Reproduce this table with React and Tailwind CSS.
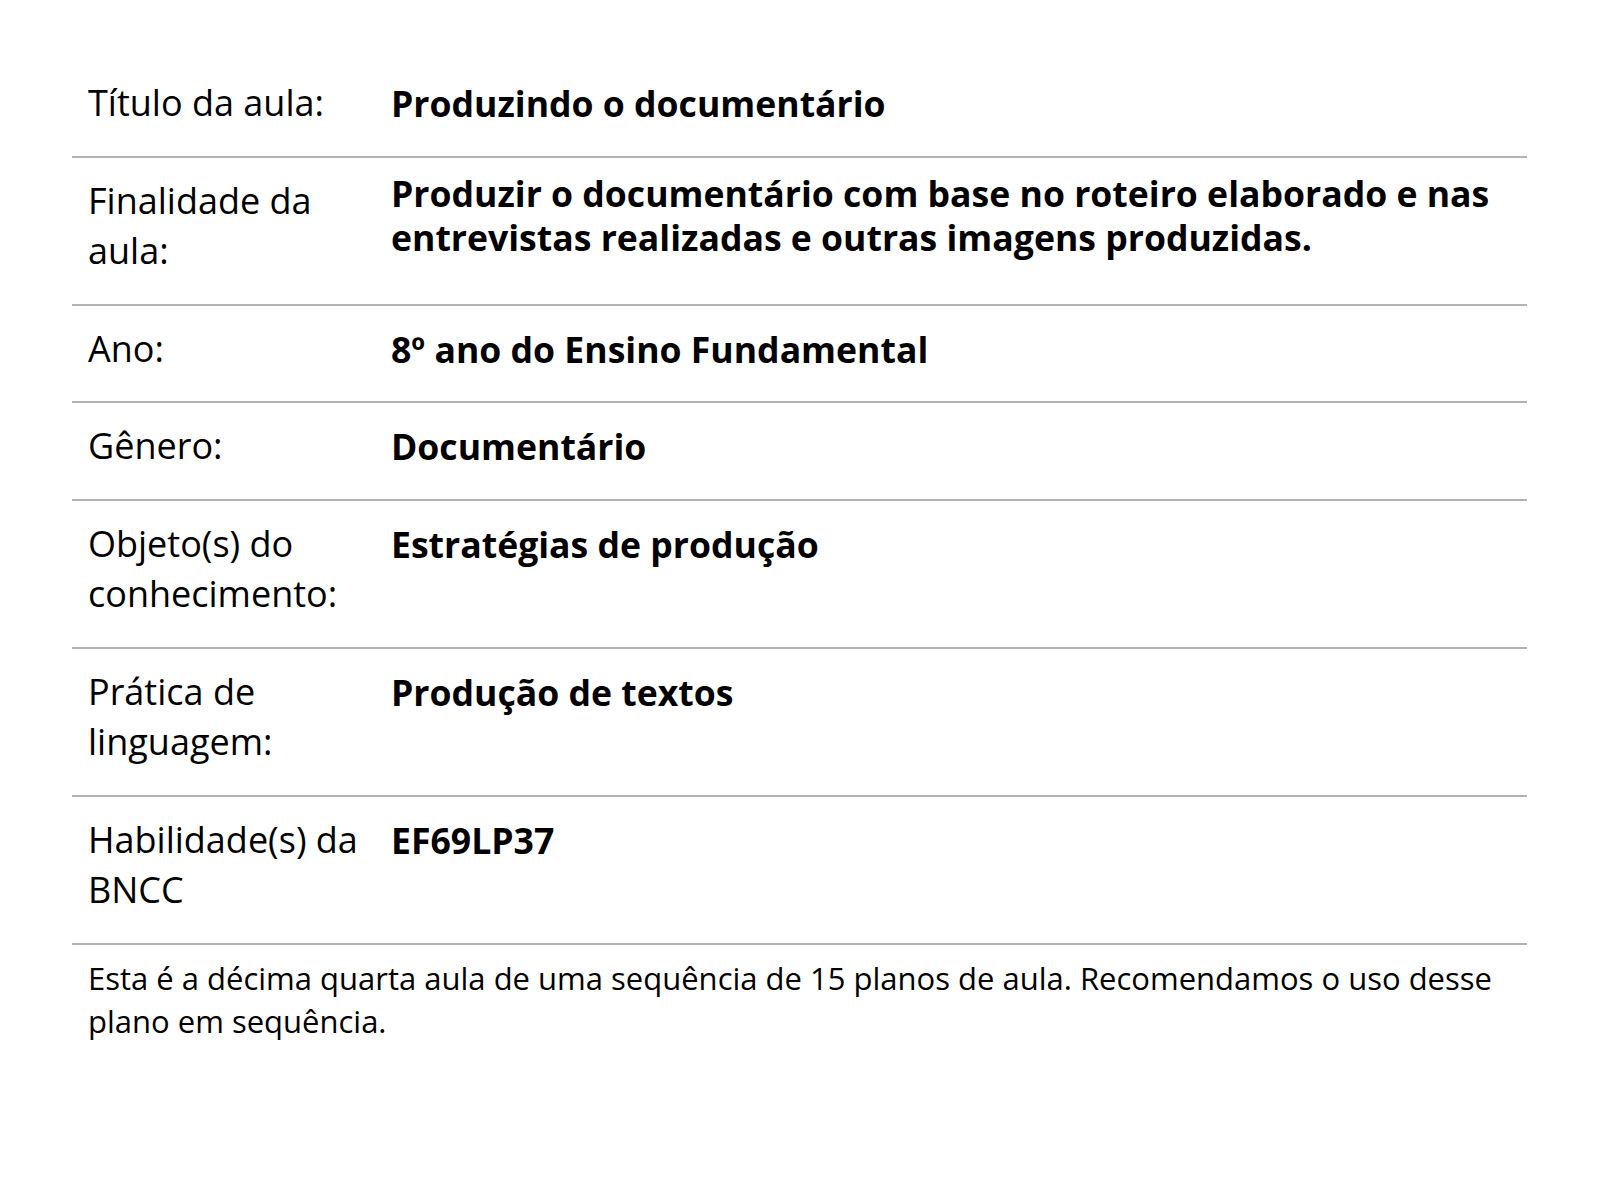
const rows = [
  { label: 'Título da aula:', value: 'Produzindo o documentário' },
  {
    label: 'Finalidade da aula:',
    value: 'Produzir o documentário com base no roteiro elaborado e nas entrevistas realizadas e outras imagens produzidas.',
    wraps: true,
  },
  { label: 'Ano:', value: '8º ano do Ensino Fundamental' },
  { label: 'Gênero:', value: 'Documentário' },
  { label: 'Objeto(s) do conhecimento:', value: 'Estratégias de produção' },
  { label: 'Prática de linguagem:', value: 'Produção de textos' },
  { label: 'Habilidade(s) da BNCC', value: 'EF69LP37' },
];

export default function App() {
  return (
    <div className="min-h-screen bg-white text-black font-['Open_Sans',sans-serif]">
      <div className="ml-[72px] w-[1455px] pt-[60px]">
        {rows.map((row) => (
          <div key={row.label} className="grid grid-cols-[303px_1fr] border-b-2 border-[#b3b3b3] pb-[27px]">
            <div className="px-4 pt-[18px] text-[36px] leading-[50.5px]">{row.label}</div>
            <div
              className={
                row.wraps
                  ? 'px-4 pt-[13px] text-[35.6px] leading-[44px] font-bold'
                  : 'px-4 pt-[18px] text-[35.6px] leading-[50.5px] font-bold'
              }
            >
              {row.value}
            </div>
          </div>
        ))}
        <p className="px-4 pt-3 text-[31px] leading-[43px]">
          Esta é a décima quarta aula de uma sequência de 15 planos de aula. Recomendamos o uso desse plano em sequência.
        </p>
      </div>
    </div>
  );
}
